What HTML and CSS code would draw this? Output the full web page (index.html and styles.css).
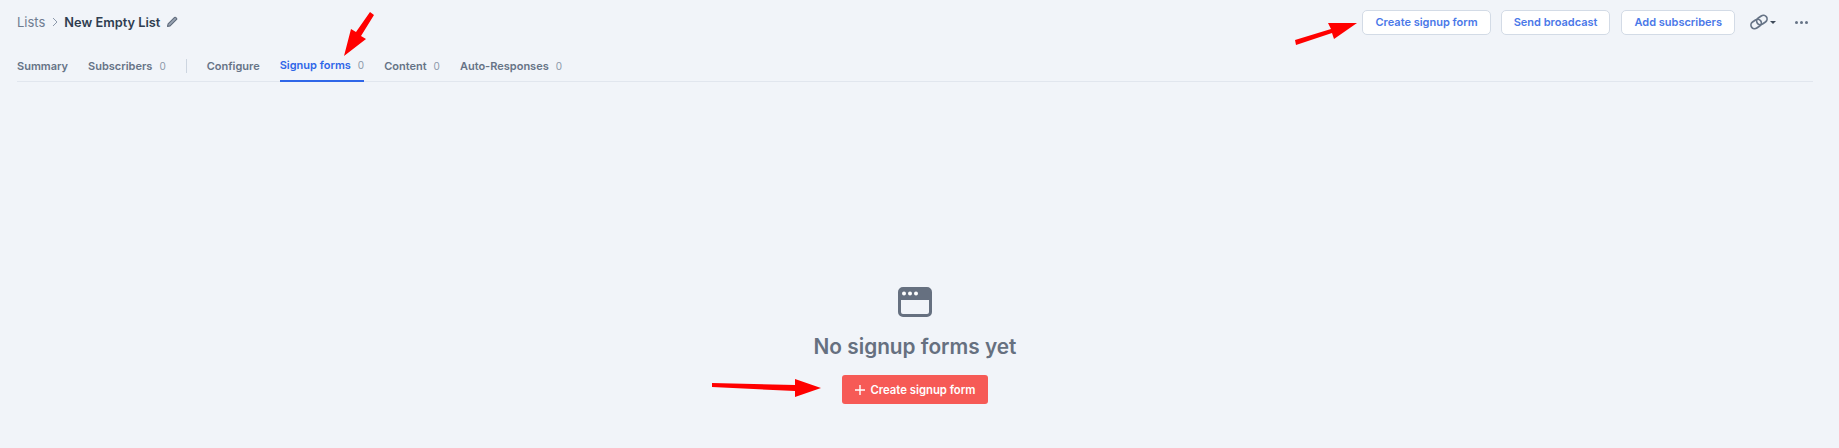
FILE: index.html
```html
<!DOCTYPE html>
<html>
  <head>
    <title>New Empty List</title>
    <link rel="stylesheet" href="styles.css">
  </head>
  <body>
    <div class="page">
      <div class="header">
        <div class="crumbs">
          <span class="crumb-link">Lists</span>
          <svg class="crumb-sep" width="8" height="10" viewBox="0 0 8 10"><path d="M2 1l4 4-4 4" fill="none" stroke="#8d99ab" stroke-width="1"/></svg>
          <span class="crumb-title">New Empty List</span>
          <svg class="pencil" width="12" height="12" viewBox="0 0 12 12"><path d="M1.500 10.500l.6-2.600L8.600 1.400a.7.7 0 0 1 1 0l1 1a.7.7 0 0 1 0 1L4.100 9.900z" fill="#9aa4b3" stroke="#5f6b7c" stroke-width="1.100" stroke-linejoin="round"/></svg>
        </div>
        <div class="actions">
          <button class="btn btn-first">Create signup form</button>
          <button class="btn btn-second">Send broadcast</button>
          <button class="btn">Add subscribers</button>
          <div class="link-menu">
            <svg width="20" height="16" viewBox="0 0 20 16"><g fill="none" stroke="#667386" stroke-width="1.700" transform="rotate(-35 10 8)"><rect x="1" y="4.300" width="11" height="7.400" rx="3.700"/><rect x="8" y="4.300" width="11" height="7.400" rx="3.700"/></g></svg>
            <span class="caret"></span>
          </div>
          <div class="dots"><span></span><span></span><span></span></div>
        </div>
      </div>
      <div class="tabs">
        <span class="tab">Summary</span>
        <span class="tab">Subscribers <em>0</em></span>
        <span class="tab-divider"></span>
        <span class="tab">Configure</span>
        <span class="tab tab-active">Signup forms <em>0</em></span>
        <span class="tab">Content <em>0</em></span>
        <span class="tab">Auto-Responses <em>0</em></span>
      </div>
      <div class="empty">
        <svg class="empty-icon" width="34" height="30" viewBox="0 0 34 30">
          <path fill-rule="evenodd" d="M5 0h24a5 5 0 0 1 5 5v20a5 5 0 0 1-5 5H5a5 5 0 0 1-5-5V5a5 5 0 0 1 5-5zM3 13v12a2 2 0 0 0 2 2h24a2 2 0 0 0 2-2V13z" fill="#667080"/>
          <circle cx="6" cy="6.500" r="2" fill="#fff"/><circle cx="12" cy="6.500" r="2" fill="#fff"/><circle cx="18" cy="6.500" r="2" fill="#fff"/>
        </svg>
        <h2 class="empty-title">No signup forms yet</h2>
        <button class="btn-create">
          <svg width="10" height="10" viewBox="0 0 10 10"><path d="M5 0v10M0 5h10" stroke="#fff" stroke-width="1.400"/></svg>
          Create signup form
        </button>
      </div>
    </div>
    <!-- red arrows drawn on top of the screenshot -->
    <svg class="arrows" width="1839" height="448" viewBox="0 0 1839 448">
      <path d="M370 12l4 3-13 21 5 3-22 17 7-27 5 3z" fill="#f00"/>
      <path d="M1295 40l36-11-3-6h29l-23 16-2-6-36 12z" fill="#f00"/>
      <path d="M712 383l83 2v-6l26 9-26 9v-6l-83-4z" fill="#f00"/>
    </svg>
  </body>
</html>
```

FILE: styles.css
```css
body {
  margin: 0;
  background-color: #f1f4f9;
  font-family: Inter, "Noto Sans", sans-serif;
  color: #667080;
  height: 448px;
  overflow: hidden;
}
.page {
  padding: 10px 26px 0 17px;
}
.header {
  display: flex;
  justify-content: space-between;
  align-items: center;
  height: 24px;
}
.crumbs {
  display: flex;
  align-items: center;
}
.crumb-link {
  font-size: 13px;
  color: #6f7d91;
}
.crumb-sep {
  margin: 0 5px 0 6px;
}
.crumb-title {
  font-size: 12.800px;
  font-weight: 600;
  color: #2f3d50;
}
.pencil {
  margin-left: 6px;
}
.actions {
  display: flex;
  align-items: center;
}
.btn {
  height: 25px;
  padding: 0 12px;
  background: #fff;
  border: 1px solid #d3dbe6;
  border-radius: 5px;
  font-family: inherit;
  font-size: 11px;
  font-weight: 600;
  color: #4a78e8;
  white-space: nowrap;
}
.btn-first {
  margin-right: 10px;
}
.btn-second {
  margin-right: 11px;
}
.link-menu {
  display: flex;
  align-items: center;
  margin-left: 14px;
}
.caret {
  width: 0;
  height: 0;
  margin-left: 1px;
  border-left: 3px solid transparent;
  border-right: 3px solid transparent;
  border-top: 3px solid #3f4a5a;
}
.dots {
  display: flex;
  gap: 2px;
  margin: 0 5px 0 19px;
}
.dots span {
  width: 3px;
  height: 3px;
  border-radius: 50%;
  background: #667386;
}
.tabs {
  display: flex;
  align-items: center;
  gap: 20px;
  height: 47px;
  border-bottom: 1px solid #e1e6ee;
}
.tab {
  display: flex;
  align-items: center;
  height: 47px;
  box-sizing: border-box;
  padding-top: 16px;
  font-size: 11px;
  font-weight: 600;
  color: #667386;
  white-space: nowrap;
}
.tab em {
  margin-left: 7px;
  font-style: normal;
  font-weight: 400;
  font-size: 10px;
  color: #8c98a9;
}
.tab-active {
  color: #2f66e8;
  border-bottom: 2px solid #2f66e8;
  margin-bottom: -1px;
}
.tab-divider {
  width: 1px;
  height: 14px;
  margin-top: 16px;
  background: #cdd5e0;
}
.empty {
  display: flex;
  flex-direction: column;
  align-items: center;
  padding-top: 205px;
}
.empty-icon {
  display: block;
}
.empty-title {
  margin: 15px 0 13px;
  font-size: 20.800px;
  line-height: 30px;
  font-weight: 600;
  color: #667080;
}
.btn-create {
  display: flex;
  align-items: center;
  gap: 6px;
  height: 29px;
  padding: 0 13px;
  border: 0;
  border-radius: 3px;
  background: #f65a56;
  color: #fff;
  font-family: inherit;
  font-size: 11.300px;
  font-weight: 600;
}
.arrows {
  position: absolute;
  top: 0;
  left: 0;
  pointer-events: none;
}
```
